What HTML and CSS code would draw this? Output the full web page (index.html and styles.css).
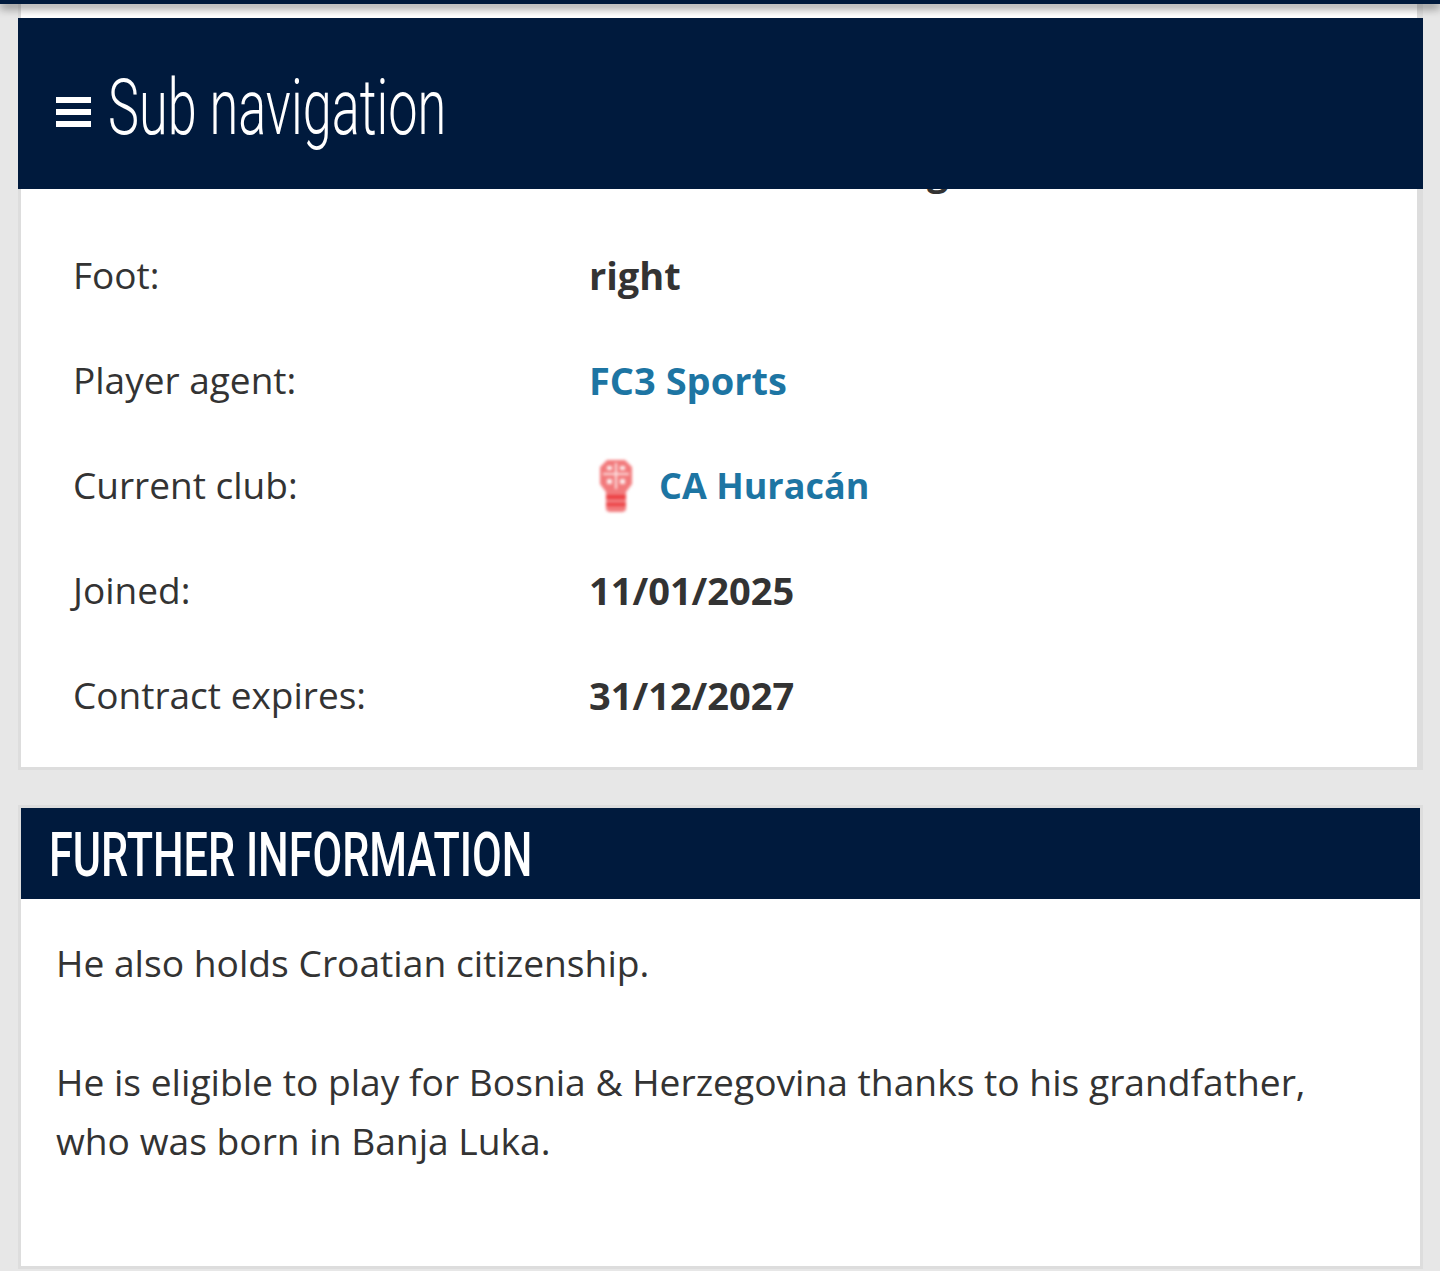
FILE: index.html
```html
<!DOCTYPE html>
<html lang="en">
<head>
  <meta charset="UTF-8">
  <title>Player profile</title>
  <link rel="stylesheet" href="styles.css">
</head>
<body>

  <div class="topbar"></div>

  <div class="subnav">
    <span class="subnav-icon"><i></i><i></i><i></i></span>
    <span class="subnav-title">Sub navigation</span>
  </div>

  <div class="page">
    <div class="card card-facts">
      <div class="row row-hidden">
        <span class="row-label"></span>
        <span class="row-value">g</span>
      </div>
      <div class="row">
        <span class="row-label">Foot:</span>
        <span class="row-value">right</span>
      </div>
      <div class="row">
        <span class="row-label">Player agent:</span>
        <a class="row-value row-link" href="#">FC3 Sports</a>
      </div>
      <div class="row">
        <span class="row-label">Current club:</span>
        <span class="row-value club">
          <svg class="club-crest" viewBox="0 0 36 54" width="36" height="54">
            <path d="M9 1h18l7 7v17l-6 8v18l-3 2H11l-3-2V33l-6-8V8z" fill="#f27a7c"/>
            <path d="M8 36h20v4H8zM8 44h20v3H8z" fill="#ec3f42"/>
            <path d="M17 4h2v26h-2zM5 14h26v2H5z" fill="#fde3e3"/>
            <path d="M9 7h5v4H9zM22 7h5v4h-5zM9 20h5v5H9zM22 20h5v5h-5z" fill="#fdeeee"/>
          </svg>
          <a class="row-link club-name" href="#">CA Huracán</a>
        </span>
      </div>
      <div class="row">
        <span class="row-label">Joined:</span>
        <span class="row-value">11/01/2025</span>
      </div>
      <div class="row">
        <span class="row-label">Contract expires:</span>
        <span class="row-value">31/12/2027</span>
      </div>
    </div>

    <div class="card card-info">
      <h2 class="card-title"><span>FURTHER INFORMATION</span></h2>
      <div class="card-text">
        <p>He also holds Croatian citizenship.</p>
        <p>He is eligible to play for Bosnia &amp; Herzegovina thanks to his grandfather, who was born in Banja Luka.</p>
      </div>
    </div>
  </div>

</body>
</html>
```

FILE: styles.css
```css
html, body {
  margin: 0;
  padding: 0;
  height: 1271px;
  overflow: hidden;
}

body {
  background: #e7e7e7;
  font-family: "Open Sans", "Noto Sans", sans-serif;
  color: #333;
  position: relative;
}

.topbar {
  height: 4px;
  background: #001a3d;
  box-shadow: 0 3px 10px rgba(0, 0, 0, 0.75);
  position: relative;
  z-index: 3;
}

/* stuck over the first card */
.subnav {
  position: absolute;
  top: 18px;
  left: 18px;
  width: 1405px;
  height: 171px;
  background: #001a3d;
  color: #fff;
  display: flex;
  align-items: center;
  padding-left: 38px;
  box-sizing: border-box;
  z-index: 2;
}

.subnav-icon {
  display: flex;
  flex-direction: column;
  gap: 6px;
  width: 35px;
  margin-top: 17px;
}

.subnav-icon i {
  display: block;
  height: 6px;
  background: #fff;
}

.subnav-title {
  font-family: "Roboto", sans-serif;
  font-weight: 300;
  font-size: 78px;
  margin-left: 17px;
  margin-top: 8px;
  transform: scaleX(0.67);
  transform-origin: left center;
  white-space: nowrap;
}

.page {
  padding: 0 17px 0 18px;
}

.card {
  background: #fff;
  border: 3px solid #ddd;
  box-sizing: border-box;
}

.card-facts {
  height: 766px;
  border-top: 0;
  border-right-width: 6px;
  padding: 218px 0 0 52px;
}

.row {
  display: grid;
  grid-template-columns: 516px 1fr;
  align-items: center;
  height: 105px;
  font-size: 37px;
}

.row-hidden {
  height: 0;
  position: relative;
  top: -78px;
}

.row-hidden .row-value {
  margin-left: 338px;
}

.row-value {
  font-size: 38px;
  font-weight: 700;
}

.row-link {
  color: #1d75a3;
  font-weight: 700;
  text-decoration: none;
}

.club {
  display: flex;
  align-items: center;
  gap: 25px;
  padding-left: 9px;
  padding-top: 2px;
}

.club-crest {
  filter: blur(1.5px);
}

.club-name {
  font-size: 36px;
}

.card-info {
  margin-top: 35px;
  height: 464px;
}

.card-title {
  margin: 0;
  height: 91px;
  background: #001a3d;
  color: #fff;
  padding-left: 28px;
  font-family: "Roboto", sans-serif;
  font-weight: 500;
  font-size: 62px;
  line-height: 93px;
  white-space: nowrap;
  overflow: hidden;
}

.card-title span {
  display: inline-block;
  transform: scaleX(0.696);
  transform-origin: left center;
}

.card-text {
  padding: 34px 100px 0 35px;
  font-size: 37.2px;
  line-height: 59px;
}

.card-text p {
  margin: 0 0 60px;
}
```
